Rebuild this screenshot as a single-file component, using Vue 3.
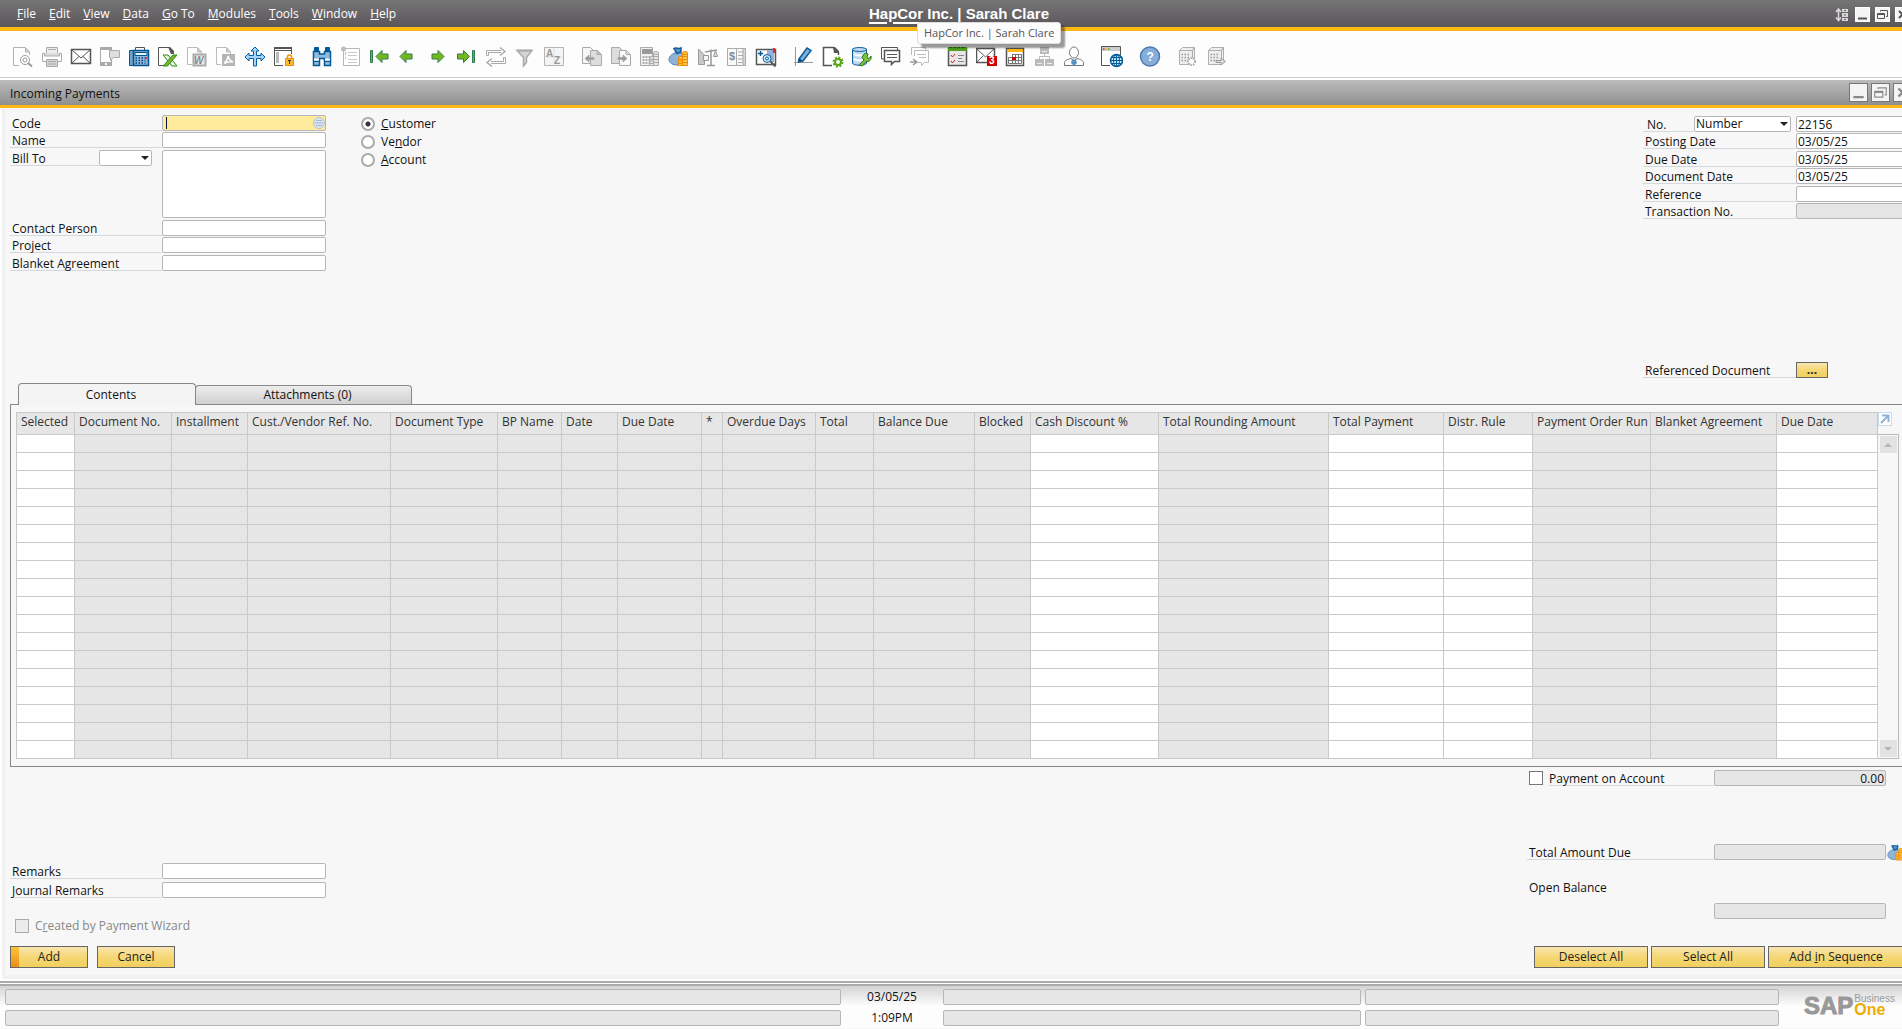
<template>
  <div class="app">
    <div class="desktop">
      <header class="menubar">
        <nav class="menu">
          <a v-for="item in menus" :key="item" href="#"><u>{{ item[0] }}</u>{{ item.slice(1) }}</a>
        </nav>
        <div class="company">
          <a href="#" class="company-name">HapCor Inc. | Sarah Clare</a>
          <div class="tooltip" role="tooltip">HapCor Inc. | Sarah Clare</div>
        </div>
        <div class="window-buttons">
          <svg class="resize-icon" width="14" height="14" viewBox="0 0 14 14" aria-hidden="true">
            <path d="M3.500 1.500V12M1 4l2.500-3L6 4M1 9.500l2.500 3L6 9.500" fill="none" stroke="#d8d8d8" stroke-width="1.500" />
            <path d="M7 1h6v3H7zM7 5h6v4H7zM7 10h6v3H7z" fill="#d8d8d8" />
            <path d="M9 2.500h2M9 7h2M9 11.500h2" stroke="#666" />
          </svg>
          <button v-for="b in windowButtons" :key="b.name" type="button" :aria-label="b.name">
            <svg width="13" height="13" viewBox="0 0 13 13"><path :d="b.path" fill="none" stroke="#555" :stroke-width="b.width" /></svg>
          </button>
        </div>
      </header>

      <div class="toolbar">
        <div v-for="(group, g) in toolbar" :key="g" class="tool-group">
          <button v-for="name in group" :key="name" type="button" :aria-label="name">
            <svg width="22" height="22" viewBox="0 0 22 22" v-html="icons[name]"></svg>
          </button>
        </div>
      </div>

      <main class="window">
        <div class="titlebar">
          <h1>Incoming Payments</h1>
          <div class="window-buttons large">
            <button v-for="b in windowButtons" :key="b.name" type="button" :aria-label="b.name + ' form'">
              <svg width="15" height="15" viewBox="0 0 13 13"><path :d="b.path" fill="none" stroke="#8a8a8a" :stroke-width="b.width" /></svg>
            </button>
          </div>
        </div>

        <div class="form">
          <div class="form-head">
            <div class="fields">
              <div class="pair">
                <div class="row">
                  <label for="code">Code</label>
                  <div class="code-field">
                    <input id="code" v-model="code" type="text" class="field active" />
                    <svg width="12" height="12" viewBox="0 0 12 12" aria-hidden="true">
                      <circle cx="6" cy="6" r="5.500" fill="#dce6f3" stroke="#b5c0cc" />
                      <path d="M3 3.500h6M2 6h8M3 8.500h6" stroke="#a3b6d2" />
                    </svg>
                    <span class="caret"></span>
                  </div>
                </div>
                <div class="row">
                  <label for="name">Name</label>
                  <input id="name" v-model="name" type="text" class="field" />
                </div>
              </div>
              <div class="row bill-row">
                <label for="billTo" class="bill-label">Bill To</label>
                <span class="select bill-select">
                  <select id="billTo" v-model="billTo"><option value=""></option></select>
                </span>
                <textarea v-model="address" class="field" aria-label="Bill to address"></textarea>
              </div>
              <div class="pair">
                <div class="row">
                  <label for="contact">Contact Person</label>
                  <input id="contact" v-model="contact" type="text" class="field" />
                </div>
                <div class="row">
                  <label for="project">Project</label>
                  <input id="project" v-model="project" type="text" class="field" />
                </div>
              </div>
              <div class="row">
                <label for="agreement">Blanket Agreement</label>
                <input id="agreement" v-model="agreement" type="text" class="field" />
              </div>
            </div>

            <div class="partner-type">
              <label><input v-model="partnerType" type="radio" value="customer" /><span><u>C</u>ustomer</span></label>
              <label><input v-model="partnerType" type="radio" value="vendor" /><span>Ve<u>n</u>dor</span></label>
              <label><input v-model="partnerType" type="radio" value="account" /><span><u>A</u>ccount</span></label>
            </div>

            <div class="doc-fields">
              <div class="fields">
                <div class="pair">
                  <div class="row">
                    <label for="docNo" class="no-label">No.</label>
                    <span class="select series-select">
                      <select v-model="series" aria-label="Series"><option>Number</option></select>
                    </span>
                    <input id="docNo" v-model="docNo" type="text" class="field" />
                  </div>
                  <div class="row">
                    <label for="postingDate">Posting Date</label>
                    <input id="postingDate" v-model="postingDate" type="text" class="field" />
                  </div>
                </div>
                <div class="pair">
                  <div class="row">
                    <label for="dueDate">Due Date</label>
                    <input id="dueDate" v-model="dueDate" type="text" class="field" />
                  </div>
                  <div class="row">
                    <label for="docDate">Document Date</label>
                    <input id="docDate" v-model="docDate" type="text" class="field" />
                  </div>
                </div>
                <div class="pair">
                  <div class="row">
                    <label for="reference">Reference</label>
                    <input id="reference" v-model="reference" type="text" class="field" />
                  </div>
                  <div class="row">
                    <label for="transNo">Transaction No.</label>
                    <input id="transNo" type="text" class="field" disabled />
                  </div>
                </div>
              </div>
              <div class="row ref-row">
                <label for="refDoc">Referenced Document</label>
                <button id="refDoc" type="button" class="btn small">...</button>
              </div>
            </div>
          </div>

          <div class="tabs" role="tablist">
            <button type="button" role="tab" :class="{ selected: tab === 'contents' }" @click="tab = 'contents'">Contents</button>
            <button type="button" role="tab" :class="{ selected: tab === 'attachments' }" @click="tab = 'attachments'">Attachments (0)</button>
          </div>
          <section class="panel">
            <table>
              <colgroup>
                <col v-for="(col, i) in columns" :key="i" :style="{ width: col.width ? col.width + 'px' : 'auto' }" />
              </colgroup>
              <thead>
                <tr><th v-for="(col, i) in columns" :key="i">{{ col.title }}</th></tr>
              </thead>
              <tbody>
                <tr v-for="r in 18" :key="r">
                  <td v-for="(col, i) in columns" :key="i" :class="{ editable: col.editable }"></td>
                </tr>
              </tbody>
            </table>
            <div class="side">
              <button type="button" class="expand" aria-label="Expand table">
                <svg width="12" height="12" viewBox="0 0 12 12"><path d="M2 10L9 3M3 2.500h6.500V9" fill="none" stroke="#8fb2d8" stroke-width="2" /></svg>
              </button>
              <div class="scrollbar">
                <button type="button" aria-label="Scroll up"><svg width="8" height="4"><path d="M0 4L4 0l4 4z" fill="#b5b5b5" /></svg></button>
                <button type="button" aria-label="Scroll down"><svg width="8" height="4"><path d="M0 0h8L4 4z" fill="#b5b5b5" /></svg></button>
              </div>
            </div>
          </section>

          <div class="form-foot">
            <div class="foot-left">
              <div class="fields remarks">
                <div class="row">
                  <label for="remarks">Remarks</label>
                  <input id="remarks" v-model="remarks" type="text" class="field" />
                </div>
                <div class="row">
                  <label for="journal">Journal Remarks</label>
                  <input id="journal" v-model="journalRemarks" type="text" class="field" />
                </div>
              </div>
              <label class="check wizard"><input type="checkbox" disabled /><span>C<u>r</u>eated by Payment Wizard</span></label>
            </div>

            <div class="totals">
              <div class="row on-account">
                <input id="onAccount" v-model="onAccount" type="checkbox" />
                <label for="onAccount">Payment on Account</label>
                <input type="text" class="field amount" value="0.00" aria-label="Payment on account amount" disabled />
              </div>
              <div class="row total-due">
                <label for="totalDue">Total Amount Due</label>
                <input id="totalDue" type="text" class="field" disabled />
                <button type="button" class="pay" aria-label="Payment means">
                  <svg width="18" height="18" viewBox="0 0 22 22" v-html="icons.payment"></svg>
                </button>
              </div>
              <label for="openBalance" class="open-label">Open Balance</label>
              <div class="row open-row">
                <input id="openBalance" type="text" class="field" disabled />
              </div>
            </div>
          </div>

          <div class="actions">
            <button type="button" class="btn default">Add</button>
            <button type="button" class="btn">Cancel</button>
            <span class="spacer"></span>
            <button type="button" class="btn mid">Deselect All</button>
            <button type="button" class="btn mid">Select All</button>
            <button type="button" class="btn long">Add&nbsp;<u>i</u>n Sequence</button>
          </div>
        </div>
      </main>

      <footer class="statusbar">
        <div class="status-grid">
          <span class="status"></span>
          <time>03/05/25</time>
          <span class="status"></span>
          <span class="status"></span>
          <span class="status"></span>
          <time>1:09PM</time>
          <span class="status"></span>
          <span class="status"></span>
        </div>
        <div class="logo">
          <strong>SAP</strong>
          <div class="logo-side"><span>Business</span><b>One</b></div>
        </div>
      </footer>
    </div>
  </div>
</template>

<script setup>
import { ref } from 'vue';

const menus = ['File', 'Edit', 'View', 'Data', 'Go To', 'Modules', 'Tools', 'Window', 'Help'];

const windowButtons = [
  { name: 'Minimize', path: 'M2 10.500h9', width: 2 },
  { name: 'Restore', path: 'M4.500 3.500V2.500h7v6H10M1.500 5.500h7v5h-7zM1.500 6.500h7', width: 1 },
  { name: 'Close', path: 'M3 3l7 7M10 3l-7 7', width: 2 }
];

// Form state
const code = ref('');
const name = ref('');
const billTo = ref('');
const address = ref('');
const contact = ref('');
const project = ref('');
const agreement = ref('');
const partnerType = ref('customer');
const series = ref('Number');
const docNo = ref('22156');
const postingDate = ref('03/05/25');
const dueDate = ref('03/05/25');
const docDate = ref('03/05/25');
const reference = ref('');
const remarks = ref('');
const journalRemarks = ref('');
const onAccount = ref(false);
const tab = ref('contents');

// Table columns, the last one takes the remaining width
const columns = [
  { title: 'Selected', width: 58, editable: true },
  { title: 'Document No.', width: 97 },
  { title: 'Installment', width: 76 },
  { title: 'Cust./Vendor Ref. No.', width: 143 },
  { title: 'Document Type', width: 107 },
  { title: 'BP Name', width: 64 },
  { title: 'Date', width: 56 },
  { title: 'Due Date', width: 84 },
  { title: '*', width: 21 },
  { title: 'Overdue Days', width: 93 },
  { title: 'Total', width: 58 },
  { title: 'Balance Due', width: 101 },
  { title: 'Blocked', width: 56 },
  { title: 'Cash Discount %', width: 128, editable: true },
  { title: 'Total Rounding Amount', width: 170 },
  { title: 'Total Payment', width: 115, editable: true },
  { title: 'Distr. Rule', width: 89, editable: true },
  { title: 'Payment Order Run', width: 118 },
  { title: 'Blanket Agreement', width: 126 },
  { title: 'Due Date', editable: true }
];

const toolbar = [
  ['preview', 'print', 'email', 'sms', 'fax', 'excel', 'word', 'pdf', 'launch', 'lock'],
  ['find', 'addForm', 'first', 'previous', 'next', 'last', 'refresh', 'filter', 'sort'],
  ['baseDoc', 'targetDoc', 'grossProfit', 'payment', 'volume', 'ledger', 'query'],
  ['layout', 'formSettings', 'queryManager', 'messages', 'forward'],
  ['activities', 'alerts', 'calendar', 'orgChart', 'contacts'],
  ['browser'],
  ['help'],
  ['companySettings', 'companyExport']
];

const coins = (fill, line) =>
  `<g fill="${fill}" stroke="${line}"><path d="M10.500 12v7.500h5V12z"/><ellipse cx="13" cy="12" rx="2.500" ry="1.500"/><path d="M14.500 7.500v12h5v-12z"/><ellipse cx="17" cy="7" rx="2.500" ry="1.500"/><path d="M11 15h4M11 17.500h4M15 10.500h4M15 13.500h4M15 16.500h4"/></g>`;
const building = '<path d="M2.500 4.500l3-3h12l-2 3zM2.500 4.500h13v14h-13zM15.500 4.500l2-3v13l-2 3" fill="#eee" stroke="#b0b0b0"/><path d="M4.500 8.500h9M4.500 11.500h9M4.500 14.500h9" stroke="#999" stroke-width="1.500" stroke-dasharray="1.500 1.500"/>';

const icons = {
  preview: '<g fill="none" stroke="#b3b3b3"><path d="M7 19.500H1.500V1.500h12l4 4V9"/><path d="M13.500 2v4h4" fill="#d0d0d0"/><circle cx="13" cy="14" r="4.500" fill="#fff" stroke="#999"/><circle cx="13" cy="14" r="2" stroke="#999"/><path d="M16 17l4 3.500" stroke="#999" stroke-width="2"/></g>',
  print: '<g fill="#ececec" stroke="#aaa"><path d="M5.500 1.500h11v6h-11z"/><path d="M7 3.500h8" fill="none"/><path d="M1.500 7.500h19v8h-19z" fill="#fff"/><path d="M3.500 7v3h15V7" fill="#ddd"/><path d="M5.500 13.500h11v7h-11z" fill="#d5d5d5"/><path d="M7 15.500h8M7 18h8"/></g>',
  email: '<g fill="none" stroke="#555"><path d="M1.500 3.500h19v14h-19z" fill="#fff" stroke-width="1.500"/><path d="M2 4l9 8 9-8M2 17l7-6.500M20 17l-7-6.500"/></g>',
  sms: '<path d="M1.500 1.500h11v18h-11z" fill="#fff" stroke="#aaa"/><path d="M1 1h12v3H1zM1 16h12v4H1z" fill="#aaa"/><path d="M6 18h2" stroke="#fff" stroke-width="2"/><path d="M10.500 4.500h10v7h-6l-3 3v-3h-1z" fill="#ddd" stroke="#aaa"/>',
  fax: '<path d="M1.500 4.500h4v15h-4z" fill="#6fa3cf" stroke="#00558c"/><path d="M7.500 1.500h9v4h-9z" fill="#fff" stroke="#555"/><path d="M5.500 4.500h15v15h-15z" fill="#8db6da" stroke="#00558c" stroke-width="1.500"/><path d="M7 6.500h12v3H7z" fill="#e8f4fc" stroke="#00558c"/><path d="M7.500 12h10M7.500 14.500h10M7.500 17h10" stroke="#00457a" stroke-width="1.500" stroke-dasharray="1.500 1.500"/><path d="M17 11h2v2h-2z" fill="#d33"/>',
  excel: '<path d="M7 19.500H1.500V1.500h11l4 4V8" fill="#fff" stroke="#555"/><path d="M11 1h2l4 4v3h-3z" fill="#555"/><path d="M6 9h5l9 11h-5z" fill="#e5f5d5" stroke="#2f8a1c"/><path d="M16 9h4l-9.500 11H6z" fill="#72b82e" stroke="#2f8a1c"/>',
  word: '<path d="M6 18.500H1.500V1.500h10l4 4V8" fill="#fff" stroke="#bbb"/><path d="M11.500 2v4h4" fill="#ccc" stroke="#bbb"/><path d="M7.500 8.500h12v11h-12z" fill="#ececec" stroke="#aaa" stroke-width="2"/><text x="8" y="18" font-family="Liberation Sans" font-size="10" font-style="italic" font-weight="bold" fill="#888">W</text>',
  pdf: '<path d="M6 18.500H1.500V1.500h10l4 4V8" fill="#fff" stroke="#bbb"/><path d="M11.500 2v4h4" fill="#ccc" stroke="#bbb"/><path d="M7 8h13v12H7z" fill="#b5b5b5"/><path d="M13 10c1 3 2 5 5 6-3-.5-6-.5-9 1.500 2-2 4-4 4-7.500z" fill="none" stroke="#fff" stroke-width="1.500"/>',
  launch: '<path d="M11 1l4 4h-2.500v4.500H17V7l4 4-4 4v-2.500h-4.500V20h-3v-7.500H5V15l-4-4 4-4v2.500h4.500V5H7z" fill="#a9d4f5" stroke="#0063a8"/>',
  lock: '<path d="M10 19.500H1.500V1.500h17V8" fill="#fff" stroke="#555"/><path d="M1 1h18v2H1zM1 4h18v1H1z" fill="#555"/><path d="M3 6h3v11H3z" fill="#bbb"/><path d="M14.500 12.500V11a2 2 0 0 1 4 0v1.500" fill="none" stroke="#f08a00" stroke-width="1.500"/><path d="M12.500 12.500h8v7h-8z" fill="#fdbb2d" stroke="#f08a00"/><path d="M15 14.500h3M16.500 14v4" stroke="#333"/>',
  find: '<g fill="#8fb9dd" stroke="#005a96"><path d="M3.500 1.500h4v4h-4zM14.500 1.500h4v4h-4z" fill="#005a96"/><path d="M2.500 5.500h6V8h5V5.500h6v14h-6v-7h-5v7h-6z" stroke-width="1.500"/><path d="M3 13.500h5M14 13.500h5" stroke="#fff" stroke-width="2"/><path d="M3 15.500h5M14 15.500h5"/></g>',
  addForm: '<path d="M3.500 2.500h16v17h-16z" fill="#fff" stroke="#b5b5b5"/><circle cx="3.500" cy="3" r="2.500" fill="#bbb"/><path d="M8 6.500h9M8 9.500h9M8 13.500h9M8 16.500h9" stroke="#c8c8c8"/><path d="M5 6h1v3H5zM5 11h1v2H5z" fill="#bbb"/>',
  first: '<g fill="#76b81b" stroke="#2e7d4f"><path d="M1.500 4.500h2v12h-2z"/><path d="M7 10.500l6-6V8h6v5h-6v3.500z"/></g>',
  previous: '<path d="M2 10.500l6-6V8h6v5H8v3.500z" fill="#76b81b" stroke="#2e7d4f"/>',
  next: '<path d="M17 10.500l-6-6V8H5v5h6v3.500z" fill="#76b81b" stroke="#2e7d4f"/>',
  last: '<g fill="#76b81b" stroke="#2e7d4f"><path d="M13.500 10.500l-6-6V8h-6v5h6v3.500z"/><path d="M16.500 4.500h2v12h-2z"/></g>',
  refresh: '<g fill="none" stroke="#aaa"><path d="M1.500 9.500v-5H16M20.500 11.500v6H6M3.500 9.500v-3H16M18.500 11.500v4H6M1.500 9.500h2M18.500 11.500h2"/><path d="M15 1.500l5 4-5 4M7 12.500l-5 4 5 4" stroke-width="1.500"/></g>',
  filter: '<path d="M3 4.500h15l-5.500 7v5l-3 3.500v-8.500z" fill="#d5d5d5" stroke="#aaa" stroke-width="1.500"/><path d="M3 4.500h15" stroke="#aaa" stroke-width="2"/>',
  sort: '<path d="M1.500 1.500h19v18h-19z" fill="#f5f5f5" stroke="#b5b5b5"/><path d="M11 2v17M2 11h18" stroke="#ddd"/><text x="3" y="11" font-family="Liberation Sans" font-size="10" font-weight="bold" fill="#999">A</text><text x="11" y="18" font-family="Liberation Sans" font-size="10" font-weight="bold" fill="#999">Z</text>',
  baseDoc: '<g stroke="#aaa"><path d="M1.500 1.500h8l3 3v13h-11z" fill="#f6f6f6"/><path d="M9.500 4.500h7l4 4v11h-11z" fill="#ddd"/><path d="M16 4.500v4h4" fill="#bbb"/><path d="M4 12.500l4-3.500v2.500h5v2H8V16z" fill="#999"/></g>',
  targetDoc: '<g stroke="#aaa"><path d="M1.500 1.500h8l3 3v13h-11z" fill="#ddd"/><path d="M9.500 4.500h7l4 4v11h-11z" fill="#fafafa"/><path d="M16 4.500v4h4" fill="#ddd"/><path d="M17 12.500L13 9v2.500H8v2h5V16z" fill="#999"/></g>',
  grossProfit: '<path d="M1.500 1.500h12v18h-12z" fill="#f2f2f2" stroke="#aaa"/><path d="M3 3h10v5H3z" fill="#999"/><path d="M3.500 11h8M3.500 14h8M3.500 17h8" stroke="#999" stroke-width="1.500" stroke-dasharray="2 1"/>' + coins('#e6e6e6', '#aaa'),
  payment: '<path d="M10 6c-5 1-9 4-9 7.500S5 19 9 19h6V8z" fill="#8fb4d8" stroke="#4f86b8"/><path d="M6 2.500c3-1.500 4 1 7-.5v4l-4 1.500z" fill="#5d97c9" stroke="#0f5e9c" stroke-width="1.500"/>' + coins('#fdc54b', '#f08a00'),
  volume: '<g fill="#ddd" stroke="#999"><path d="M1.500 3v15.500h6V9z" fill="#c8c8c8"/><path d="M14 3.500v16M10 19.500h8M8 6l12-2" stroke-width="1.500"/><path d="M6.500 9.500h5v5h-5z" fill="#f5f5f5"/><path d="M16.500 10.500l2-6 2 6z"/></g>',
  ledger: '<g fill="#f8f8f8" stroke="#aaa"><path d="M1.500 2.500h9v17h-9zM10.500 2.500h9v17h-9z"/><path d="M17 2.500h2.500v17H17z" fill="#d8d8d8"/><path d="M12 6h5M12 9.500h5M12 13h5M12 16.500h5"/></g><text x="3" y="14" font-family="Liberation Sans" font-size="11" font-weight="bold" fill="#888">$</text>',
  query: '<path d="M1.500 3.500h19v15h-19z" fill="#fff" stroke="#555" stroke-width="1.500"/><path d="M12 4h7v12h-7z" fill="#8fb3dc"/><path d="M18 2h2v5h-2z" fill="#c33"/><path d="M3 7.500h5M5.500 5v5" stroke="#005a96" stroke-width="1.500"/><circle cx="12" cy="12.500" r="4" fill="#cfe8f7" stroke="#0f5e9c"/><circle cx="12" cy="12.500" r="1.500" fill="none" stroke="#0f5e9c"/><path d="M15.500 15.500l5 5" stroke="#555" stroke-width="2"/>',
  layout: '<path d="M2.500 1v19M1 16.500h19" stroke="#999"/><path d="M6 13l8-11 4 2.500-8 10.500-4.500 1z" fill="#7fb0d8" stroke="#0f5e9c" stroke-width="1.500"/><path d="M5 16l1-4 3.500 2.500z" fill="#0f4f86"/>',
  formSettings: '<path d="M10 19.500H1.500V1.500h10l5 5V9" fill="#fff" stroke="#555" stroke-width="1.500"/><path d="M11 1h2l4 4v2h-5z" fill="#555"/><circle cx="16" cy="16" r="4.500" fill="none" stroke="#58a618" stroke-width="2" stroke-dasharray="2 1.500"/><circle cx="16" cy="16" r="3" fill="none" stroke="#58a618" stroke-width="2"/>',
  queryManager: '<g fill="#bcd8f0" stroke="#0f5e9c"><path d="M1.500 3v14c0 3 14 3 14 0V3z"/><path d="M3 8c2 2 9 2 11 0M3 13c2 2 9 2 11 0" fill="none" stroke="#fff" stroke-width="2"/><ellipse cx="8.500" cy="3.500" rx="7" ry="2"/></g><path d="M8 19l5-5a3.500 3.500 0 0 1 4-6l-1 3 2 1.500 2-2.500c1 4-2 6-5 5.500L11 20z" fill="#7cc142" stroke="#2f7a1c"/>',
  messages: '<g fill="#fff" stroke="#555"><path d="M4 13H1.500V1.500h16V4" fill="none"/><path d="M4.500 4.500h15v11h-5l-3 3v-3h-7z" stroke-width="1.500"/><path d="M7 8.500h10M7 11.500h10"/></g>',
  forward: '<g fill="#fff" stroke="#bbb"><path d="M2.500 9V1.500h14V4" fill="none"/><path d="M5.500 10V4.500h14v12h-4l-3 3v-3H9"/><path d="M8 8.500h9M10 11.500h7"/><path d="M1 16h6M4 13l4 3-4 3" stroke="#999" stroke-width="1.500"/></g>',
  activities: '<path d="M1.500 2.500h18v17h-18z" fill="#e8e8e8" stroke="#555" stroke-width="1.500"/><path d="M1 1h19v4H1z" fill="#4fa31b"/><path d="M3 1.500h15" stroke="#2c6e0c" stroke-dasharray="2 2"/><path d="M4 9l1.500 2L8 8M4 15l1.500 2L8 14" fill="none" stroke="#c22"/><path d="M11 9.500h6M11 12.500h4M11 15.500h6" stroke="#888"/>',
  alerts: '<g fill="#fff" stroke="#555"><path d="M.5 2.500h18v14H.500z" stroke-width="1.500"/><path d="M1 3l8.500 8L18 3M1 16l6-6" fill="none"/></g><path d="M11 10h10v10H11z" fill="#d40000"/><text x="13" y="18" font-family="Liberation Sans" font-size="10" font-weight="bold" fill="#fff">3</text>',
  calendar: '<path d="M1.500 2.500h17v17h-17z" fill="#fff" stroke="#555" stroke-width="1.500"/><path d="M2 3h16v3H2z" fill="#fdb813"/><path d="M7.500 8.500h9v9h-13v-6h13M3.500 14.500h13M7.500 8v9.500M10.500 8v9.500M13.500 8v9.500" fill="none" stroke="#777"/><path d="M7 11h4v3H7z" fill="#c00"/>',
  orgChart: '<g fill="#bbb"><path d="M6 1h9v7H6zM1 13h9v7H1zM11 13h9v7h-9z"/></g><path d="M10.500 8v3M5.500 13v-2.500h10V13" fill="none" stroke="#bbb"/><path d="M8 5.500h5M3 17.500h5M13 17.500h5" stroke="#eee"/>',
  contacts: '<path d="M1.500 19.500v-3c0-2 3-3 6.500-4l3 2 3-2c3.500 1 6.500 2 6.500 4v3z" fill="#fff" stroke="#777"/><ellipse cx="11" cy="6.500" rx="4.500" ry="5.500" fill="#fff" stroke="#777"/><path d="M9 13l2 1 2-1 1 4-3 3-3-3z" fill="#5c93c4"/>',
  browser: '<path d="M9 19.500H.500V.500h19V9" fill="#fff" stroke="#555"/><path d="M1 1h18v4H1z" fill="#ccc"/><path d="M2 3h1.500" stroke="#c33" stroke-width="1.500"/><path d="M4.500 3H6" stroke="#e8b010" stroke-width="1.500"/><path d="M7 3h1.500" stroke="#4a4" stroke-width="1.500"/><circle cx="15.500" cy="14.500" r="6" fill="#cbe6f6" stroke="#005a96" stroke-width="1.500"/><path d="M15.500 8.500v12M9.500 14.500h12M11 11.500h9M11 17.500h9" stroke="#005a96"/><ellipse cx="15.500" cy="14.500" rx="3" ry="6" fill="none" stroke="#005a96"/>',
  help: '<circle cx="11" cy="10.500" r="9.500" fill="#85aedb" stroke="#4c7ca8" stroke-width="1.500"/><text x="7.500" y="15" font-family="Liberation Sans" font-size="12" font-weight="bold" fill="#fff">?</text>',
  companySettings: building + '<circle cx="14.500" cy="15.500" r="3.500" fill="#fff" stroke="#aaa" stroke-width="2" stroke-dasharray="1.500 1"/>',
  companyExport: building + '<path d="M10 14.500h5V12l4.500 3.500L15 19v-2.500h-5z" fill="#ddd" stroke="#999"/>'
};
</script>

<style>
body {
  margin: 0;
  overflow: hidden;
  background: #f7f7f7;
}
</style>

<style scoped>
.app {
  overflow: hidden;
  font-family: "Open Sans", "Noto Sans", sans-serif;
  font-size: 12px;
  line-height: 16px;
  color: #111;
}

/* The desktop runs a little past the right edge of the screen */
.desktop {
  width: calc(100% + 16px);
  background: #fff;
}

button,
input,
select,
textarea {
  font: inherit;
  color: inherit;
  box-sizing: border-box;
  margin: 0;
}

button {
  padding: 0;
}

.menubar {
  display: grid;
  grid-template-columns: 1fr auto 1fr;
  align-items: center;
  height: 27px;
  background: linear-gradient(#767576, #5a565a);
  border-bottom: 4px solid #fdb813;
}

.menu {
  display: flex;
  gap: 13px;
  padding-left: 17px;
}

.menu a {
  color: #fff;
  text-decoration: none;
}

.company {
  position: relative;
}

.company-name {
  color: #fff;
  font-family: "Liberation Sans", Arial, sans-serif;
  font-size: 15px;
  line-height: 20px;
  font-weight: bold;
  text-underline-offset: 3px;
  text-decoration-thickness: 2px;
}

.tooltip {
  position: absolute;
  top: 18px;
  left: 48px;
  z-index: 2;
  padding: 1px 6px;
  font-size: 11px;
  line-height: 18px;
  white-space: nowrap;
  color: #555;
  background: #fcfcfc;
  border: 1px solid #ddd;
  border-radius: 3px;
  box-shadow: 4px 4px 2px rgba(0, 0, 0, 0.4);
}

.window-buttons {
  display: flex;
  justify-content: flex-end;
  align-items: center;
  gap: 5px;
  padding: 2px 8px 0 0;
}

.window-buttons button {
  display: flex;
  align-items: center;
  justify-content: center;
  width: 15px;
  height: 15px;
  background: #f4f4f4;
  border: 1px solid #fff;
}

.resize-icon {
  margin-right: 1px;
}

.window-buttons.large {
  gap: 3px;
  padding: 0 6px 0 0;
}

.large button {
  width: 19px;
  height: 19px;
  border-color: #777;
}

.toolbar {
  display: flex;
  gap: 16px;
  height: 47px;
  padding: 6px 0 0 12px;
  align-items: center;
  box-sizing: border-box;
  background: #fdfdfd;
  border-bottom: 1px solid #ccc;
}

.tool-group {
  display: flex;
  gap: 7px;
}

.toolbar button {
  width: 22px;
  height: 22px;
  background: none;
  border: 0;
}

.toolbar svg {
  display: block;
}

.window {
  margin-top: 2px;
}

.titlebar {
  display: flex;
  align-items: center;
  justify-content: space-between;
  height: 25px;
  padding-left: 10px;
  background: linear-gradient(#bcbcbc, #8f8f8f);
  border-bottom: 3px solid #fdb813;
}

h1 {
  margin: 0;
  padding-top: 2px;
  font-size: 12px;
  font-weight: normal;
}

.form {
  padding: 7px 10px 7px 5px;
  margin-left: 2px;
  background: #f7f7f7;
  border-left: 3px solid #f1f1f1;
  border-bottom: 4px solid #f1f1f1;
}

.form-head {
  display: flex;
  height: 268px;
}

.fields {
  display: flex;
  flex-direction: column;
  gap: 2px;
}

.pair {
  display: flex;
  flex-direction: column;
  gap: 1px;
}

.row {
  display: flex;
  align-items: flex-start;
}

.row label {
  width: 152px;
  height: 16px;
  box-sizing: border-box;
  padding: 1px 0 0 2px;
  border-bottom: 1px solid #d3d8dc;
}

.field {
  width: 164px;
  height: 16px;
  padding: 0 1px;
  line-height: 14px;
  background: #fff;
  border: 1px solid #b4b6b8;
  border-radius: 2px;
  outline: 0;
}

.field:disabled {
  background: #e6e6e6;
  color: #111;
}

.field.active {
  background: #feeb9b;
}

textarea.field {
  display: block;
  height: 68px;
  resize: none;
}

.code-field {
  position: relative;
  display: flex;
}

.code-field svg {
  position: absolute;
  top: 2px;
  right: 1px;
}

.caret {
  position: absolute;
  top: 2px;
  left: 4px;
  width: 1px;
  height: 12px;
  background: #113;
}

.row .bill-label {
  width: 89px;
}

.select {
  position: relative;
  height: 16px;
}

.select select {
  display: block;
  width: 100%;
  height: 16px;
  padding: 0 1px;
  line-height: 14px;
  appearance: none;
  background: #fff;
  border: 1px solid #b4b6b8;
  border-radius: 2px;
}

.select::after {
  content: "";
  position: absolute;
  top: 6px;
  right: 3px;
  border: 4px solid transparent;
  border-top-color: #222;
  border-bottom: 0;
}

.bill-select {
  width: 53px;
  margin-right: 10px;
}

.partner-type {
  display: flex;
  flex-direction: column;
  gap: 2px;
  margin: 1px 0 0 35px;
}

.partner-type label {
  display: flex;
  align-items: center;
  gap: 6px;
}

.partner-type input {
  appearance: none;
  width: 14px;
  height: 14px;
  background: #fff;
  border: 2px solid #aaa;
  border-radius: 50%;
}

.partner-type input:checked {
  background: radial-gradient(circle, #334 2px, #fff 3px);
}

.doc-fields {
  margin: 1px 0 0 auto;
}

.doc-fields .row label {
  width: 153px;
}

.doc-fields .field {
  width: 112px;
}

.doc-fields .row .no-label {
  width: 51px;
  padding-left: 4px;
}

.series-select {
  width: 97px;
  margin-right: 5px;
}

.ref-row {
  margin-top: 143px;
}

.btn {
  width: 78px;
  height: 22px;
  line-height: 20px;
  background: linear-gradient(#f8e6b0, #f5d774 50%, #f1d05e);
  border: 1px solid #666;
  color: #222;
}

.btn.small {
  width: 32px;
  height: 16px;
  line-height: 12px;
  font-weight: bold;
}

.btn.default {
  background: linear-gradient(#fbc43a, #ef8d1b) 0 0 / 8px 100% no-repeat, linear-gradient(#f8e6b0, #f5d774 50%, #f1d05e);
}

.tabs {
  display: flex;
  align-items: flex-end;
  height: 21px;
  padding-left: 9px;
}

.tabs button {
  width: 217px;
  height: 19px;
  margin-left: -1px;
  padding-left: 8px;
  background: linear-gradient(#ededed, #cfcfcf);
  border: 1px solid #888;
  border-bottom: 0;
  border-radius: 4px 4px 0 0;
}

.tabs button.selected {
  position: relative;
  width: 178px;
  height: 22px;
  margin-bottom: -1px;
  background: #f4f4f4;
}

.panel {
  display: flex;
  padding: 7px 8px 7px 5px;
  border: 1px solid #888;
}

table {
  flex: 1;
  width: 0;
  table-layout: fixed;
  border-collapse: collapse;
}

th,
td {
  box-sizing: border-box;
  padding: 0;
  border: 1px solid #c9c9c9;
  background: #e6e6e6;
}

th {
  height: 22px;
  padding: 0 0 4px 4px;
  font-weight: normal;
  text-align: left;
  white-space: nowrap;
  color: #333;
}

td {
  height: 18px;
}

td.editable {
  background: #fff;
}

.side {
  display: flex;
  flex-direction: column;
  width: 21px;
}

.expand {
  width: 14px;
  height: 14px;
  margin-bottom: 8px;
  background: #fff;
  border: 1px solid #c5dbef;
}

.expand svg {
  display: block;
}

.scrollbar {
  flex: 1;
  display: flex;
  flex-direction: column;
  justify-content: space-between;
  align-items: center;
  padding: 1px;
  border: 1px solid #bbb;
  border-left: 0;
}

.scrollbar button {
  display: flex;
  align-items: center;
  justify-content: center;
  width: 17px;
  height: 17px;
  background: #e2e2e2;
  border: 0;
}

.form-foot {
  display: flex;
  justify-content: space-between;
  height: 179px;
}

.remarks {
  gap: 3px;
  margin-top: 96px;
}

.check {
  display: flex;
  align-items: center;
  gap: 6px;
}

.wizard {
  margin: 20px 0 0 5px;
  color: #888;
}

input[type="checkbox"] {
  appearance: none;
  width: 14px;
  height: 14px;
  background: #fff;
  border: 1px solid #777;
}

input[type="checkbox"]:disabled {
  background: #ebebeb;
  border-color: #aaa;
}

.totals {
  width: 381px;
  padding-top: 3px;
}

.totals .field {
  width: 172px;
}

.on-account input[type="checkbox"] {
  margin: 1px 6px 0 2px;
}

.on-account label {
  width: 165px;
  padding-left: 0;
}

.amount {
  text-align: right;
}

.total-due {
  margin-top: 58px;
}

.total-due label {
  width: 187px;
}

.pay {
  width: 18px;
  height: 18px;
  margin-left: 1px;
  background: none;
  border: 0;
}

.pay svg {
  display: block;
}

.open-label {
  display: block;
  margin-top: 18px;
  padding-left: 2px;
}

.open-row {
  margin-top: 7px;
  padding-left: 187px;
}

.actions {
  display: flex;
  gap: 3px;
  padding-right: 4px;
}

.default {
  margin-right: 6px;
}

.spacer {
  flex: 1;
}

.btn.mid {
  width: 114px;
}

.btn.long {
  width: 136px;
}

.statusbar {
  display: flex;
  align-items: flex-start;
  padding: 3px 0 2px 5px;
  margin-top: 2px;
  background: linear-gradient(#d4d4d4, #fdfdfd 20px);
  border-top: 5px double #aaa;
}

.status-grid {
  flex: 1;
  display: grid;
  grid-template-columns: 836fr 94px 418fr 414fr;
  gap: 5px 4px;
}

.status {
  height: 14px;
  background: #e6e6e6;
  border: 1px solid #b4b6b8;
  border-radius: 2px;
}

time {
  text-align: center;
  line-height: 16px;
}

.logo {
  display: flex;
  gap: 1px;
  width: 114px;
  padding: 5px 0 0 25px;
  font-family: "Liberation Sans", Arial, sans-serif;
}

.logo strong {
  font-size: 24px;
  line-height: 24px;
  color: #999;
  -webkit-text-stroke: 1px #999;
}

.logo-side {
  display: flex;
  flex-direction: column;
}

.logo-side span {
  font-size: 10px;
  line-height: 9px;
  color: #999;
}

.logo-side b {
  font-size: 16px;
  line-height: 14px;
  color: #f0ab00;
}
</style>
